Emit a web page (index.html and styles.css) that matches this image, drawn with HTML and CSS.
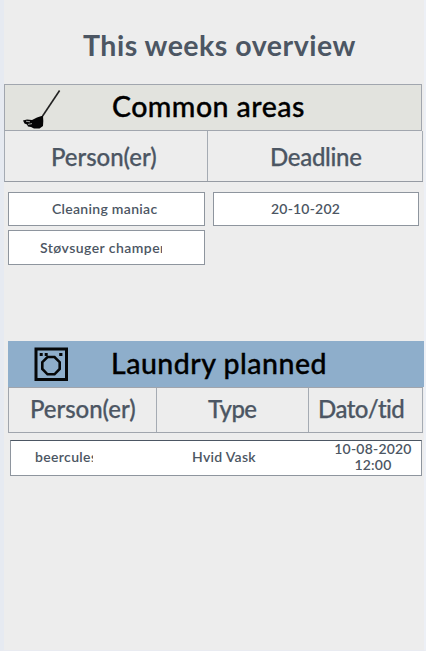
FILE: index.html
```html
<!DOCTYPE html>
<html lang="en">
<head>
<meta charset="utf-8">
<title>This weeks overview</title>
<link rel="stylesheet" href="styles.css">
</head>
<body>
<main class="page">
  <h1 class="title">This weeks overview</h1>
  <section class="common">
    <header class="banner">
      <svg class="broom" viewBox="0 0 40 42" aria-hidden="true">
        <path d="M36.6 3.5 L19.6 29" fill="none" stroke="#222" stroke-width="1.6"/>
        <path d="M20 28.5 L20.3 34 L20 39 L16.5 41.5 L11 41.5 L8 40 L5 39.5 L4 37.5 L1.5 36.5 L0 33.5 L4 32.4 L9 33 L14 30.5Z" fill="#050505"/>
        <path d="M3 34.2 L7 34.8 M5 37.4 L9 36.6" fill="none" stroke="#b8bab5" stroke-width=".9"/>
      </svg>
      <h2>Common areas</h2>
    </header>
    <div class="heads">
      <div class="head"><span class="person">Person(er)</span></div>
      <div class="head"><span class="deadline">Deadline</span></div>
    </div>
    <div class="entries">
      <div class="box"><span class="cleaning">Cleaning maniac</span></div>
      <div class="box"><span class="date">20-10-202</span></div>
      <div class="box"><span class="vacuum">Støvsuger champen</span></div>
    </div>
  </section>
  <section class="laundry">
    <header class="banner">
      <svg class="washer" viewBox="0 0 34 34" aria-hidden="true">
        <rect x="2" y="2" width="30.5" height="30.5" fill="none" stroke="#050708" stroke-width="3"/>
        <path d="M13.5 10 H20.5 L25.7 15.2 V22 L20.5 27.3 H13.5 L8.3 22 V15.2Z" fill="none" stroke="#050708" stroke-width="2.6"/>
        <path d="M5.7 6h3v3h-3zM10.7 6h3v3h-3zM25.2 6h3.2v3h-3.2z" fill="#050708"/>
      </svg>
      <h2>Laundry planned</h2>
    </header>
    <div class="heads">
      <div class="head"><span class="person">Person(er)</span></div>
      <div class="head"><span class="type">Type</span></div>
      <div class="head"><span class="datetime">Dato/tid</span></div>
    </div>
    <div class="booking">
      <span class="user">beercules</span>
      <span class="wash">Hvid Vask</span>
      <span class="when">10-08-2020<br>12:00</span>
    </div>
  </section>
</main>
</body>
</html>
```
FILE: styles.css
```css
* { box-sizing: border-box; }
body { margin: 0; background: #ededed; font-family: Lato, sans-serif; color: #4c5663; }
.page { height: 651px; overflow: hidden; border-left: 4px solid #e6eaf1; border-right: 2px solid #edf0f6; border-bottom: 1px solid #e9ebf1; }
h1, h2 { margin: 0; white-space: nowrap; }
span { white-space: nowrap; }
.title { height: 84px; padding: 27px 0 0 79px; font-size: 28.5px; line-height: 36px; font-weight: 700; letter-spacing: .5px; }
.banner { display: flex; }
h2 { font-size: 28.5px; line-height: 34px; font-weight: 500; color: #000; letter-spacing: .46px; -webkit-text-stroke: .35px; }
.common { height: 257px; }
.common .banner { width: 418px; height: 47px; padding: 4px 0 0 18px; background: #e2e3de; border: 1px solid #a1a6ae; }
.broom { width: 40px; height: 42px; margin-top: -2px; flex: none; }
.common h2 { margin-left: 49px; }
.heads { display: grid; }
.head { border-right: 1px solid #a5abb3; font-size: 24px; line-height: 30px; font-weight: 500; letter-spacing: -.05px; -webkit-text-stroke: .25px; }
.common .heads { width: 419px; height: 51px; grid-template-columns: 203px 1fr; border-left: 1px solid #a5abb3; border-bottom: 1px solid #969ba3; }
.common .head { padding-top: 11px; }
.common .person { margin-left: 46px; }
.deadline { margin-left: 62px; letter-spacing: -.3px; }
.entries { display: grid; grid-template-columns: 197px 206px; column-gap: 8px; row-gap: 4px; padding: 10px 0 0 4px; }
.box { height: 34px; padding-top: 7px; background: #fff; border: 1px solid #8e959e; font-size: 14px; line-height: 18px; font-weight: 600; letter-spacing: .3px; }
.box:nth-child(3) { height: 35px; }
.box span { display: block; overflow: hidden; }
.cleaning { margin-left: 43px; }
.date { margin-left: 57px; width: 80px; letter-spacing: .2px; }
.vacuum { margin-left: 31px; width: 122px; padding-top: 1px; letter-spacing: .45px; }
.laundry .banner { width: 416px; height: 46px; margin-left: 4px; padding: 6px 0 0 26px; background: #8eaecb; }
.washer { width: 34px; height: 34px; flex: none; }
.laundry h2 { margin: -1px 0 0 43px; letter-spacing: .5px; }
.laundry .heads { width: 415px; height: 46px; margin-left: 4px; grid-template-columns: 148px 152px 1fr; border: 1px solid #a0a5ad; border-right: 0; }
.laundry .head { padding-top: 6px; }
.laundry .person { margin-left: 21px; }
.laundry .type { margin-left: 51px; letter-spacing: -.6px; }
.datetime { margin-left: 9px; letter-spacing: -.55px; }
.booking { display: flex; width: 412px; height: 36px; margin: 7px 0 0 6px; background: #fff; border: 1px solid #8e959e; border-top-color: #4c5663; font-size: 14px; line-height: 18px; font-weight: 600; letter-spacing: .3px; }
.user { width: 58px; margin: 7px 0 0 24px; overflow: hidden; letter-spacing: .35px; }
.wash { width: 66px; margin: 7px 0 0 99px; }
.when { width: 80px; margin: 0 0 0 75px; line-height: 16px; text-align: center; letter-spacing: .2px; }
```
